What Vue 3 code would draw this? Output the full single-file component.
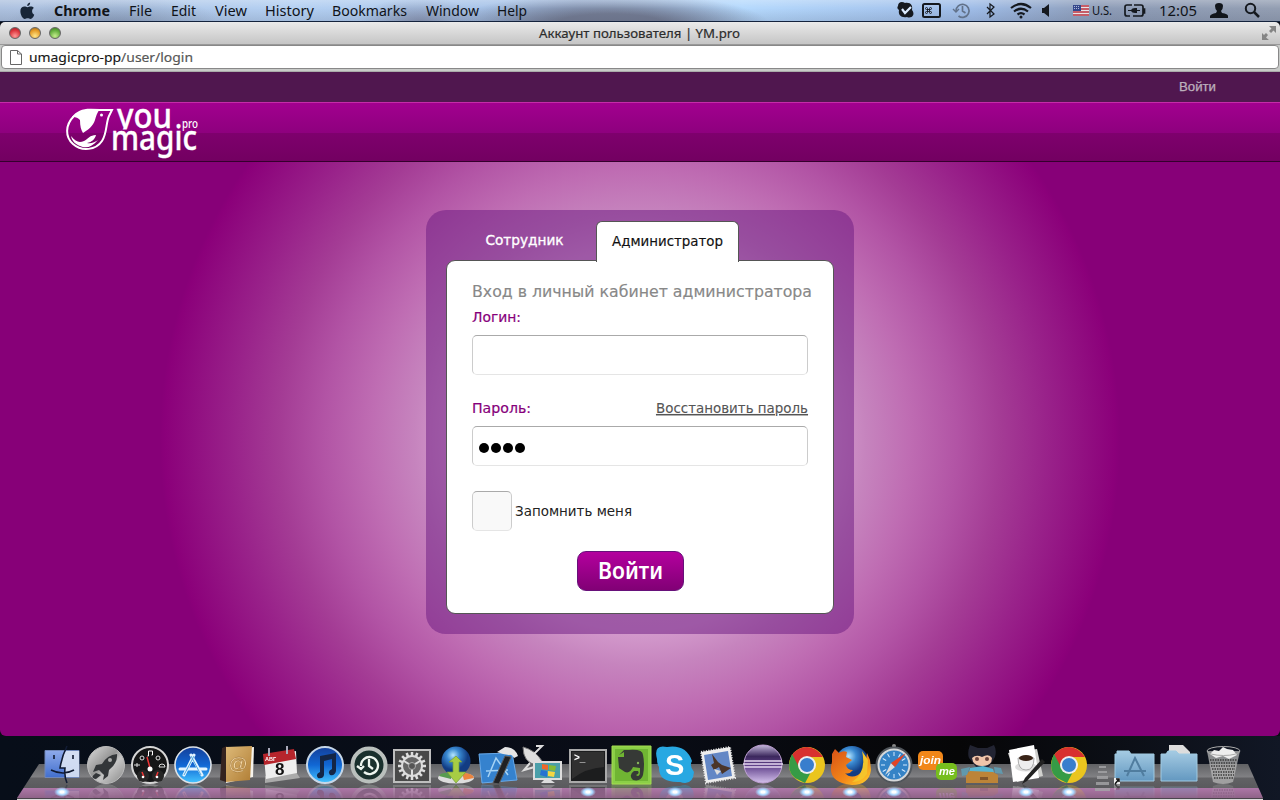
<script setup>
const menus = [
  { t: 'Chrome', w: 75, l: 56 }, { t: 'File', w: 42, l: 23 }, { t: 'Edit', w: 44, l: 25 },
  { t: 'View', w: 50, l: 32 }, { t: 'History', w: 67, l: 49 }, { t: 'Bookmarks', w: 94, l: 75 },
  { t: 'Window', w: 71, l: 53 }, { t: 'Help', w: 50, l: 30 }
]
const gearTeeth = Array.from({ length: 16 }, (_, i) => i * 22.5)
const compassTicks = Array.from({ length: 12 }, (_, i) => i * 30)
</script>

<template>
  <div class="screen">
    <header class="menubar">
      <svg class="apple" viewBox="0 0 16 18"><path fill="#182638" d="M10.8 0C8.8.3 7.6 1.9 7.7 3.7 9.6 3.6 11 2 10.8 0ZM8 5C6.800 5 6 4 4.300 4.300 1.700 4.500.3 6.700.4 9.500.6 13.500 3 17.500 5.100 17.500 6.200 17.500 6.900 16.800 8.200 16.800 9.500 16.800 10.100 17.500 11.200 17.500 13 17.400 14.600 14.900 15.200 12.900 13.600 12.100 12.900 10.900 12.900 9.300 12.900 7.800 13.600 6.700 14.800 5.900 13.900 4.700 12.700 4.300 11.600 4.300 10.100 4.200 9 5 8 5Z"/></svg>
      <nav>
        <svg v-for="(m, i) in menus" :key="m.t" :width="m.w" height="22"><text x="0" y="16" :textLength="m.l" lengthAdjust="spacingAndGlyphs" :class="{ strong: i === 0 }">{{ m.t }}</text></svg>
      </nav>
      <svg class="status" viewBox="0 0 380 22" fill="none" stroke="#15191f">
        <g transform="translate(-2 0)"><path stroke="none" fill="#15191f" d="M0 6C0 2 4 1 7 3 13 2 15 6 14 10 18 15 13 19 9 17 3 18 0 15 1 10-1 9-1 7 0 6Z"/><path d="m4 9 3 4 6-6" stroke="#dcecff" stroke-width="2.200"/></g>
        <g transform="translate(-1 0)"><rect x="24" y="4" width="17" height="13" rx="1.500" stroke-width="2"/>
        <g stroke-width=".9"><rect x="28.500" y="9.500" width="2" height="2"/><circle cx="27.500" cy="8.500" r="1"/><circle cx="31.500" cy="8.500" r="1"/><circle cx="27.500" cy="12.500" r="1"/><circle cx="31.500" cy="12.500" r="1"/></g></g>
        <g stroke="#62728a" stroke-width="1.700"><path d="M56 11a6.500 6.500 0 1 1 2.500 5M62.500 6v5l3 2"/><path d="m53 9 3 3 3-3" stroke-width="1.400"/></g>
        <path d="m87 7 7 7-4 3V4l4 3-7 7" stroke-width="1.200"/>
        <g stroke-width="2.200"><path d="M111 8q10-8 20 0M114 11.500q7-5.500 14 0M117.500 14.500q3.500-2.600 7 0"/></g><circle cx="121" cy="17" r="1.500" fill="#15191f" stroke="none"/>
        <path stroke="none" fill="#15191f" d="M142 8h2l5-4v13l-5-4h-2z"/>
        <g stroke="none"><rect x="173" y="5" width="16" height="11" fill="#e8e4e8"/><path d="M181 6h8M173 9h16M173 12h16M173 15h16" stroke="#ba303c" stroke-width="1.500"/><path fill="#34478b" d="M173 5h8v6h-8z"/><path d="M174 6.500h6m-6 2h6" stroke="#e4e8f5" stroke-width=".7" stroke-dasharray="1 1"/></g>
        <text class="us" x="192" y="15" textLength="20" lengthAdjust="spacingAndGlyphs">U.S.</text>
        <path d="M232 5h-5q-2 0-2 2v7q0 2 2 2h3m4-11h7q2 0 2 2v7q0 2-2 2h-8M243 9h1.500v4H243" stroke-width="1.700"/><path stroke="none" fill="#15191f" d="M228 10h3q1-2 4-2h2v2h3v1h-3v2h-2q-3 0-4-2h-3z"/>
        <text x="259" y="16" textLength="38" lengthAdjust="spacingAndGlyphs">12:05</text>
        <path stroke="none" fill="#11151b" d="M310 18v-2q1-2 6-3l1-2q-2-2-2-5 0-3 4-3t4 3q0 3-2 5l1 2q6 1 6 3v2z"/>
        <circle cx="350.500" cy="8.500" r="4.700" stroke-width="2"/><path d="m354 12 5 5" stroke-width="2.500"/>
      </svg>
    </header>

    <section class="window">
      <div class="titlebar">
        <i class="light red"></i><i class="light amber"></i><i class="light green"></i>
        <svg class="title" width="202" height="24"><text x="0" y="17" textLength="201" lengthAdjust="spacingAndGlyphs">Аккаунт пользователя | YM.pro</text></svg>
        <svg class="expand" width="16" height="16" viewBox="0 0 16 16" fill="#858585"><path d="M8 1h7v7l-2.500-2.500L10 8 8 6l2.500-2.500zM1 8l2 2 2-2 2 2-2 2.500 3 2.500H1z"/></svg>
      </div>
      <div class="addressbar">
        <div class="address">
          <svg width="12" height="15" viewBox="0 0 12 15" fill="#fff" stroke="#666"><path d="M.5.5h7L11.500 4v10.500H.5zM7.500.5V4h4"/></svg>
          <svg class="url" width="166" height="22"><text x="0" y="16" textLength="164" lengthAdjust="spacingAndGlyphs">umagicpro-pp<tspan fill="#5c5c5c">/user/login</tspan></text></svg>
        </div>
      </div>
      <div class="userbar"><svg width="38" height="20"><text x="0" y="14" textLength="37" lengthAdjust="spacingAndGlyphs">Войти</text></svg></div>
      <div class="brandbar">
        <svg class="logo" viewBox="0 0 134 52" fill="#fff">
          <clipPath id="upper"><path d="M48 0h60v21.500H48z"/></clipPath>
          <path fill="none" stroke="#fff" stroke-width="2" d="M8 8C-1 17-1 29 7 36c9 8 23 6 29-3 5-7 4-19 7-25l3-6H31"/>
          <path d="M6 9C10 3 17 .5 25 .7L34 1c-3 4-4 7-5 11-2 6-7 10-12 13-2-3-3-7-3-13-3-3-5-3-8-3Z"/><circle cx="35.500" cy="7" r="1.500"/>
          <path d="M5 28c5 6 8 7 13 5 4-2 6-6 12-6-1 4-4 7-9 8 4 1 8-1 11-3-6 7-12 9-18 6-5-2-8-5-9-10Z"/>
          <g clip-path="url(#upper)"><text class="word" x="51" y="20" font-size="35" textLength="55" lengthAdjust="spacingAndGlyphs">you</text></g>
          <text class="word" x="45" y="42" font-size="34" textLength="86" lengthAdjust="spacingAndGlyphs">magic</text>
          <text class="word small" x="116" y="20" font-size="12" textLength="16" lengthAdjust="spacingAndGlyphs">pro</text>
        </svg>
      </div>
      <main class="page">
        <div class="panel">
          <div class="tabs">
            <svg class="tab" width="150" height="40"><text x="39.500" y="24" textLength="78" lengthAdjust="spacingAndGlyphs">Сотрудник</text></svg>
            <div class="tab active"><svg width="141" height="40"><text x="15" y="24" textLength="111" lengthAdjust="spacingAndGlyphs">Администратор</text></svg></div>
          </div>
          <form class="card" @submit.prevent>
            <svg class="heading" width="342" height="24"><text x="0" y="16" textLength="340" lengthAdjust="spacingAndGlyphs">Вход в личный кабинет администратора</text></svg>
            <div class="row first"><svg width="60" height="20"><text x="0" y="15" textLength="49" lengthAdjust="spacingAndGlyphs">Логин:</text></svg></div>
            <div class="field"></div>
            <div class="row"><svg width="60" height="20"><text x="0" y="15" textLength="59" lengthAdjust="spacingAndGlyphs">Пароль:</text></svg>
              <svg class="restore" width="152" height="20"><text x="0" y="15" textLength="152" lengthAdjust="spacingAndGlyphs">Восстановить пароль</text></svg></div>
            <div class="field"><b v-for="n in 4" :key="n"></b></div>
            <div class="remember"><span></span><svg width="120" height="20"><text x="0" y="15" textLength="117" lengthAdjust="spacingAndGlyphs">Запомнить меня</text></svg></div>
            <button type="button"><svg width="66" height="34"><text x="0" y="25" textLength="65" lengthAdjust="spacingAndGlyphs">Войти</text></svg></button>
          </form>
        </div>
      </main>
    </section>

    <footer class="dock">
      <svg class="defs" width="0" height="0"><defs>
        <linearGradient id="blue" x2="0" y2="1"><stop stop-color="#143f99"/><stop offset=".5" stop-color="#1167d4"/><stop offset="1" stop-color="#44c4ff"/></linearGradient>
        <linearGradient id="finder" x2="0" y2="1"><stop stop-color="#8eaaea"/><stop offset="1" stop-color="#426fce"/></linearGradient>
        <linearGradient id="silver" x2="1" y2="1"><stop stop-color="#ddd"/><stop offset=".45" stop-color="#959595"/><stop offset=".6" stop-color="#c5c5c5"/><stop offset="1" stop-color="#888"/></linearGradient>
        <linearGradient id="gold" x2="1" y2="1"><stop stop-color="#ddb978"/><stop offset="1" stop-color="#b07d34"/></linearGradient>
        <linearGradient id="folder" x2="0" y2="1"><stop stop-color="#a5cbe3"/><stop offset="1" stop-color="#6398c0"/></linearGradient>
        <radialGradient id="globe" cx=".4" cy=".3"><stop stop-color="#b6e7ff"/><stop offset=".45" stop-color="#3988d0"/><stop offset="1" stop-color="#123c83"/></radialGradient>
        <linearGradient id="eclipse" x2="0" y2="1"><stop stop-color="#c3b8da"/><stop offset=".3" stop-color="#3c285d"/><stop offset=".55" stop-color="#62438c"/><stop offset="1" stop-color="#d4c1ec"/></linearGradient>
        <linearGradient id="fire" x2="1" y2="1"><stop stop-color="#d75016"/><stop offset=".6" stop-color="#f58a19"/><stop offset="1" stop-color="#ffd82e"/></linearGradient>
      </defs></svg>
      <div class="shelf"></div>
      <div class="icons">
        <div class="slot lit"><svg viewBox="0 0 44 40"><path fill="url(#finder)" stroke="#7087b9" d="M5 6.500h34v27H5z"/><path fill="#dce4f4" opacity=".9" d="M26 7h13v26H25l-1-9h-4c1-7 2-12 6-17z"/><path fill="none" stroke="#111b33" stroke-width="1.600" d="M14 11v4M33 11v4M27 2q-5 10-7 22h5q-1 8 2 15M11 26q12 6 23 0"/></svg></div>
        <div class="slot"><svg viewBox="0 0 44 40"><circle cx="22" cy="21" r="18.500" fill="url(#silver)" stroke="#bbb"/><path fill="#333639" d="M33 10q-10 1-15 10l-6 1-3 7 6-2 5 5-1 5 5-4 1-6q9-7 8-16ZM12 29q-7 5 0 6l5-4z"/><circle cx="26" cy="16" r="2" fill="#aaa"/></svg></div>
        <div class="slot"><svg viewBox="0 0 44 40"><circle cx="22" cy="21" r="18" fill="#151617" stroke="#d6d6d6" stroke-width="2"/><circle cx="15" cy="32" r="6" fill="#262626"/><circle cx="30" cy="32" r="6" fill="#262626"/><path stroke="#e33" stroke-width="1.500" d="M19 13l3 11M14 28l2 5M30 28l-2 5"/><circle cx="22" cy="25" r="2.500" fill="#fff"/><circle cx="15" cy="33" r="1.300" fill="#fff"/><circle cx="29" cy="33" r="1.300" fill="#fff"/><g fill="none" stroke="#ddd"><circle cx="14" cy="14" r="2"/><circle cx="30" cy="14" r="2"/><path d="M6 21h6m-3-2v4M31 23h6q0-3-3-3t-3 3"/></g><path fill="none" stroke="#fff" d="M20.500 12V7h4v4m-5 1h1m3-1h1"/></svg></div>
        <div class="slot"><svg viewBox="0 0 44 40"><circle cx="22" cy="21" r="18" fill="url(#blue)" stroke="#dde3e9" stroke-width="1.600"/><g stroke="#e3f3ff" stroke-width="3" stroke-linecap="round"><path d="M13 31 23 11M20 11l11 20M9 25h26"/></g><path stroke="#4fa6de" d="m13 31 10-19M20 12l10 19"/></svg></div>
        <div class="slot"><svg viewBox="0 0 44 40"><path fill="#f6f3ec" d="m11 5 28-2-1 30-27 6z"/><path fill="#35231f" d="m7 4 5-2-1 36-6-2z"/><path fill="url(#gold)" d="m11 3 26-1-2 34-24 2z"/><text x="13.500" y="26" font-size="19" fill="#f5d9a8" stroke="#8d632b" stroke-width=".3">@</text></svg></div>
        <div class="slot"><svg viewBox="0 0 44 40"><path fill="#aaa" d="m6 32 31-4 4 6-35 5z"/><path fill="#eee" d="m5 13 32-6 1 22-31 6z"/><path fill="#b6252c" d="m4 10 31-5 2 10-32 6z"/><path stroke="#aab" stroke-width="2" d="M10 4v8M28 2v8"/><text x="16" y="31" font-size="17" font-weight="bold" fill="#111">8</text><text x="6" y="17" font-size="5.500" font-weight="bold" fill="#fff">АВГ</text></svg></div>
        <div class="slot"><svg viewBox="0 0 44 40"><circle cx="22" cy="21" r="18" fill="url(#blue)" stroke="#c6d7e8" stroke-width="2"/><path fill="#142646" d="m17 12 16-3v18q-1 5-6 4-3-4 2-6V15l-8 2v14q-1 4-6 3-3-4 2-6z"/></svg></div>
        <div class="slot"><svg viewBox="0 0 44 40"><circle cx="22" cy="21" r="16.500" fill="#19302d" stroke="#bac0bd" stroke-width="4"/><path fill="none" stroke="#edf5ef" stroke-width="2.300" d="M14 22a8.500 8.500 0 1 1 3 6M22 15v7l4 3M10 22l4 3 3-3"/></svg></div>
        <div class="slot"><svg viewBox="0 0 44 40"><path fill="#494949" stroke="#bebebe" stroke-width="2" d="M4 6h36v32H4z"/><g stroke="#dedede" stroke-width="2.500"><path v-for="a in gearTeeth" :key="a" d="M22 8v5" :transform="`rotate(${a} 22 22)`"/></g><circle cx="22" cy="22" r="10" fill="#666" stroke="#ddd" stroke-width="2"/><path stroke="#ddd" stroke-width="2" d="m22 22-8-5m8 5 8-5m-8 5v9"/><circle cx="22" cy="22" r="3.500" fill="#555" stroke="#aaa"/></svg></div>
        <div class="slot"><svg viewBox="0 0 44 40"><ellipse cx="22" cy="34" rx="18" ry="5.500" fill="#ddd"/><path fill="#eb8540" d="M28 29q11 0 12 5l-10 2z"/><path fill="#589c50" d="M5 32q2-4 12-3v6z"/><circle cx="22" cy="17" r="14.500" fill="url(#globe)"/><path fill="#a7cd44" stroke="#739c3a" stroke-width=".7" d="m22 12 6 6h-3v10h7L22 39l-9-11h6V18h-4z"/></svg></div>
        <div class="slot"><svg viewBox="0 0 44 40"><path fill="#3582ce" stroke="#68aaea" d="m1 10 33-1 5 27-35 3z"/><path fill="none" stroke="#a6d3f5" stroke-width="1.500" d="m10 33 8-19 12 17M8 27l22-1"/><path fill="#202124" stroke="#5a5a5a" d="m27 12 6 1-12 27-6-1z"/><path fill="#e5e5e5" d="m19 8 8-5q10 0 13 9l-4 2q-2-4-5-3l-6-1z"/></svg></div>
        <div class="slot"><svg viewBox="0 0 44 40"><path fill="#ddd" stroke="#777" d="M1 3q0 16 14 18l5-4Q13 6 1 3Z"/><path fill="none" stroke="#ddd" stroke-width="2" d="m9 13 11-11-6 0M8 19l-6 7 14-4"/><path fill="#4a9fa9" stroke="#ddd" stroke-width="2" d="M12 18h27v17H12z"/><path fill="#ddd" d="M22 36h7l4 3H19z"/><path fill="#ec682b" d="m20 20 6 1v5l-6-1z"/><path fill="#85bb35" d="m27 21 7 1-1 5-6-1z"/><path fill="#2772d1" d="m19 26 6 1v6l-7-2z"/><path fill="#f5d642" d="m26 27 7 1-1 5-6-1z"/></svg></div>
        <div class="slot lit"><svg viewBox="0 0 44 40"><path fill="#1c1d1e" stroke="#aaa" stroke-width="2" d="M4 6h36v32H4z"/><path fill="#303030" d="M6 8h32v15q-18 1-32 12z"/><text x="8" y="17" font-size="10" font-weight="bold" fill="#fff">&gt;_</text></svg></div>
        <div class="slot"><svg viewBox="0 0 44 40"><path fill="#8bcf47" stroke="#a5dd50" d="M3 2h39v38H3z"/><path fill="#70b533" d="M6 5h33v32H6z"/><path fill="#363936" d="m10 11 5-5h5q14-1 14 5 2 9 0 20-2 7-10 5-5-5 1-9h4q2 3-2 4 4 3 4-4v-3l-7-1q-3 7-8 5l-6-4-1-11h6V8z"/><circle cx="29" cy="19" r="1.200" fill="#88b55d"/></svg></div>
        <div class="slot lit"><svg viewBox="0 0 44 40"><path fill="#28a8e2" d="M4 15q-4-15 10-12 19-3 25 14-3 5 2 11-1 14-14 10Q5 39 6 23q-2-3-2-8Z"/><text x="12" y="31" font-size="29" font-weight="bold" fill="#fff">S</text></svg></div>
        <div class="slot"><svg viewBox="0 0 44 40"><path fill="#eee" stroke="#eee" stroke-width="2" stroke-dasharray="1 1.500" d="m4 8 29-5 5 31-29 5z"/><path fill="#6387c5" d="m7 11 24-4 4 25-24 4z"/><path fill="#4b3529" d="m15 10 6 8 4 3 9 3-9 6-3-7-5 3-3-5 3-2z"/><path fill="#ddd" d="m17 25 7 2-4 4z"/></svg></div>
        <div class="slot lit"><svg viewBox="0 0 44 40"><circle cx="22" cy="20" r="19" fill="url(#eclipse)" stroke="#c2a2d7"/><path stroke="#e5d8ef" stroke-width="1.300" d="M3 17h38M2 20h40M3 23h38"/></svg></div>
        <div class="slot lit"><svg viewBox="0 0 44 40"><circle cx="22" cy="21" r="18" fill="#eac51e"/><path fill="#d8312f" d="M22 21H11L7 11Q13 3 22 3t16 10H22z"/><path fill="#369b46" d="M7 10Q0 26 10 34l10 5 7-13-12-1z"/><circle cx="22" cy="21" r="9" fill="#eee"/><circle cx="22" cy="21" r="7" fill="#397ecd"/></svg></div>
        <div class="slot lit"><svg viewBox="0 0 44 40"><circle cx="24" cy="19" r="17" fill="url(#globe)"/><path fill="url(#fire)" d="M4 10 7 5l4 4q4-3 8-1l-1 5 6 3-6 5q1 5 7 5-4 5-8 3 5 6 13 2 8-6 9-22l3 7 1 10q-2 15-19 15Q-2 38 4 18z"/><path fill="#f4c42b" d="m34 7 6 9-1 14q-5 8-15 8 15-9 10-31z"/></svg></div>
        <div class="slot lit"><svg viewBox="0 0 44 40"><circle cx="22" cy="2" r="2" fill="#888"/><circle cx="22" cy="21" r="17" fill="#3583c6" stroke="#50555b" stroke-width="3"/><circle cx="22" cy="21" r="15.500" fill="none" stroke="#d5d8da" stroke-width="2"/><g stroke="#d4eaff"><path v-for="a in compassTicks" :key="a" d="M22 8v4" :transform="`rotate(${a} 22 21)`"/></g><path fill="#ddd" d="m13 31 6-12 4 4z"/><path fill="#e34525" d="m34 9-11 14-4-4z"/></svg></div>
        <div class="slot"><svg viewBox="0 0 44 40"><rect x="2" y="7" width="25" height="19" rx="5" fill="#f18719"/><rect x="20" y="19" width="21" height="17" rx="5" fill="#76be1d"/><text x="4" y="20" font-size="11" font-style="italic" font-weight="bold" fill="#fff" textLength="21" lengthAdjust="spacingAndGlyphs">join</text><text x="23" y="31" font-size="11" font-style="italic" font-weight="bold" fill="#fff" textLength="16" lengthAdjust="spacingAndGlyphs">me</text></svg></div>
        <div class="slot"><svg viewBox="0 0 44 40"><path fill="#222432" d="m10 1 8 3h9l7-3q3 5 1 12l-6 10H16l-7-9Q7 9 10 1Z"/><path fill="#efc5aa" d="M12 14q4-4 10-1 7-4 10 1 0 8-10 8-9 0-10-8Z"/><circle cx="17" cy="15" r="2" fill="#6b443c"/><circle cx="27" cy="15" r="2" fill="#6b443c"/><path fill="#58b5d1" d="m10 24 13-2 10 3 2 7H8z"/><path fill="#bc8438" d="m6 30 4-3 23 1 5 3v8H6z"/><path fill="#6199ad" d="m1 25 9-2-3 8-5 1zM34 23l7 1 2 6-8-1z"/><path fill="#80552a" d="M20 33h8v3h-8z"/></svg></div>
        <div class="slot lit"><svg viewBox="0 0 44 40"><path fill="#d1d1ce" d="m4 9 29-4 6 27-26 6z"/><path fill="#fff" d="m5 6 25-5 5 33-26 4z"/><ellipse cx="22" cy="23" rx="11" ry="4.500" fill="#ddd"/><path fill="#eee" stroke="#aaa" d="M14 14h16q0 12-8 12t-8-12Z"/><ellipse cx="22" cy="14" rx="7" ry="3" fill="#392317"/><path fill="#222" d="m38 15 3 3-18 19-5 3 3-6z"/></svg></div>
        <div class="slot lit"><svg viewBox="0 0 44 40"><circle cx="22" cy="21" r="18" fill="#eac51e"/><path fill="#d8312f" d="M22 21H11L7 11Q13 3 22 3t16 10H22z"/><path fill="#369b46" d="M7 10Q0 26 10 34l10 5 7-13-12-1z"/><circle cx="22" cy="21" r="9" fill="#eee"/><circle cx="22" cy="21" r="7" fill="#397ecd"/></svg></div>
        <svg class="separator" width="22" height="56"><path fill="#a5a5a8" opacity=".8" d="M8 22h7v2H8zm-1 5h9v2H7zm-1 5h11v3H6zm-1 6h13v3H5zm-1 6h15v3H4z"/></svg>
        <div class="slot"><svg viewBox="0 0 44 40"><path fill="url(#folder)" stroke="#a0cae1" d="M2 10h2V7h12l2 3h23v27H2z"/><path fill="none" stroke="#507d9f" stroke-width="2" d="m14 32 8-18 9 18M11 27h22"/><path fill="#eee" d="M1 34h6v6H1z"/><path fill="none" stroke="#111" stroke-width="1.500" d="m2 40 4-5m-3 0h3v3"/></svg></div>
        <div class="slot"><svg viewBox="0 0 44 40"><path fill="#ddd" d="M12 1h14l7 7v8H12z"/><path fill="url(#folder)" stroke="#a0cae1" d="M4 10h5l2-3h8l3 3h18v27H4z"/></svg></div>
        <div class="slot"><svg viewBox="0 0 44 40"><path fill="#b5b5b5" opacity=".75" d="m6 7 6 31q10 4 20 0l7-31z"/><path stroke="#3c3c3c" stroke-width="1.500" stroke-dasharray="1.500 1" d="M9 16h27M10 19h25M10 22h25M11 25h23M12 28h21M12 31h21M13 34h19"/><path fill="#eee" d="m9 10 4-4 5 1 4-4 4 2 6 1 4 5-8 4-6-3-7 2z"/><ellipse cx="22.500" cy="7" rx="16.500" ry="4.500" fill="none" stroke="#aaa"/></svg></div>
      </div>
    </footer>
  </div>
</template>

<style>
html, body { margin: 0; overflow: hidden; }
</style>
<style scoped>
.screen { width: 1280px; height: 800px; overflow: hidden; position: relative; background: #090c14; font-family: "DejaVu Sans", sans-serif; }
svg { display: block; flex: none; overflow: visible; }
.menubar { height: 22px; box-sizing: border-box; border-bottom: 1px solid #14233d; display: flex; background: linear-gradient(rgba(255,255,255,.25), transparent 40%, rgba(60,70,95,.15)), radial-gradient(ellipse 110px 30px at 115px 25px, #8c9fbc 0%, transparent 100%), radial-gradient(ellipse 60px 25px at 420px 22px, #8995b2 0%, transparent 100%), radial-gradient(ellipse 160px 32px at 610px 25px, #737b92 35%, transparent 100%), linear-gradient(90deg, #adc1df, #b4d0f2 23%, #a2bee5 45%, #b5d9fd 58%, #9fbce7 76%, #8d9cb7 86%, #939eb2); font-family: "Noto Sans", sans-serif; }
.menubar text { font-size: 14px; fill: #101318; stroke: none; }
.menubar text.strong { font-weight: 700; }
.menubar text.us { font-size: 12px; }
.apple { width: 15px; height: 18px; margin: 2px 19px 0 20px; }
.menubar nav { display: flex; width: 846px; }
.status { width: 380px; height: 22px; }
.window { height: 714px; overflow: hidden; border-radius: 5px 5px 6px 6px; }
.titlebar { height: 23px; box-sizing: border-box; background: linear-gradient(#eaeaea, #c5c5c5); border-bottom: 1px solid #999; display: flex; align-items: center; padding-left: 9px; gap: 8px; }
.light { width: 12px; height: 12px; border-radius: 50%; box-sizing: border-box; border: 1px solid #666; }
.red { background: radial-gradient(circle at 50% 80%, #ff9a98, #dc353d 60%, #982027); }
.amber { background: radial-gradient(circle at 50% 80%, #ffe68a, #e59c29 60%, #956319); }
.green { background: radial-gradient(circle at 50% 80%, #c5ed8d, #63ad3e 60%, #3b7625); }
.title { margin-left: 470px; font: 13px "Noto Sans", sans-serif; fill: #2c2c2c; stroke: #2c2c2c; stroke-width: .2px; }
.expand { margin-left: auto; margin-right: 3px; }
.addressbar { height: 27px; box-sizing: border-box; background: #c8cac8; padding: 0 1px 2px 1px; border-bottom: 1px solid #aaa; }
.address { height: 24px; box-sizing: border-box; border: 1px solid #888; border-radius: 4px; background: #fff; display: flex; align-items: center; padding-left: 8px; gap: 7px; }
.url { font: 13px "Noto Sans", sans-serif; fill: #111; stroke: #333; stroke-width: .15px; }
.userbar { height: 30px; background: #50174f; display: flex; justify-content: flex-end; align-items: center; padding-right: 63px; font: 12px "Liberation Sans", sans-serif; }
.userbar text { fill: #bcb0bc; stroke: #bcb0bc; stroke-width: .25px; }
.brandbar { height: 60px; box-sizing: border-box; border-top: 1px solid #c42ca8; border-bottom: 1px solid #35002d; background: linear-gradient(#a2008f 0, #8e007e 51%, #7e006d 52%, #730061); padding: 5px 0 0 66px; }
.logo { width: 134px; height: 52px; overflow: visible; }
.word { font-family: "Noto Sans", sans-serif; font-weight: 500; stroke: #fff; stroke-width: .35px; }
.small { stroke-width: 0; }
.page { height: 574px; display: flex; justify-content: center; align-items: flex-start; padding-top: 48px; box-sizing: border-box; background: radial-gradient(circle 480px at 640px 278px, #e0bcdf 0, #d39acc 40%, #c684be 47%, #bf6db3 56%, #b254a5 66%, #a43c95 75%, #99228a 85%, #8b007a 99%, #870078 100%); }
.panel { width: 428px; height: 424px; box-sizing: border-box; border-radius: 20px; background: rgba(106, 24, 127, .5); padding: 11px 21px 0 20px; }
.tabs { display: flex; height: 40px; position: relative; margin-bottom: -1px; z-index: 1; }
.tab text { font-size: 14px; fill: #fff; stroke: #fff; stroke-width: .35px; }
.active { width: 143px; height: 41px; box-sizing: border-box; border: 1px solid #555; border-bottom: 0; background: #fff; border-radius: 6px 6px 0 0; }
.active text { fill: #111; stroke: #111; stroke-width: .15px; }
.card { width: 388px; height: 354px; box-sizing: border-box; border: 1px solid #555; border-radius: 9px; background: #fff; padding: 20px 25px 0; }
.heading { font-size: 16px; fill: #888; stroke: #888; stroke-width: .15px; }
.row { display: flex; justify-content: space-between; height: 28px; font-size: 14px; fill: #87007b; padding-top: 23px; }
.row text { stroke: #87007b; stroke-width: .2px; }
.row.first { padding-top: 2px; }
.row .restore text { fill: #555; stroke: #555; stroke-width: .1px; text-decoration: underline; }
.field { width: 336px; height: 40px; box-sizing: border-box; border: 1px solid; border-color: #aaa #ccc #e5e5e5; border-radius: 5px; display: flex; align-items: center; gap: 2px; padding: 4px 0 0 6px; }
.field b { width: 10px; height: 10px; border-radius: 50%; background: #000; }
.remember { display: flex; align-items: center; gap: 3px; margin-top: 25px; font-size: 14px; fill: #222; }
.remember span { width: 40px; height: 40px; box-sizing: border-box; border: 1px solid; border-color: #aaa #ccc #e5e5e5; background: #f9f9f9; border-radius: 5px; }
button { width: 107px; height: 40px; display: flex; justify-content: center; align-items: center; padding: 0; margin: 20px 0 0 105px; border: 1px solid #67117a; border-radius: 9px; background: linear-gradient(#b4009e, #810075); font: 600 23px "Noto Sans", sans-serif; }
button text { fill: #fff; }
.dock { position: relative; height: 64px; overflow: hidden; background: linear-gradient(90deg, #070e19, #090c16 50%, #060607 75%, #111725); }
.defs { position: absolute; }
.shelf { position: absolute; left: 17px; top: 28px; width: 1246px; height: 36px; clip-path: polygon(22px 0, 1231px 0, 100% 34px, 100% 100%, 0 100%, 0 34px); background: linear-gradient(#606164 0, #818184 13px, #626265 14px, #5a5a5d 24px, #ad77a7 24px, #8f6388 34px, #4b444b 34px, #4b444b 35px, #ddd 35px); }
.icons { position: relative; display: flex; padding: 8px 0 0 40px; }
.slot { width: 43.8px; height: 56px; position: relative; flex: none; }
.slot > svg { width: 44px; height: 40px; font-family: "Liberation Sans", sans-serif; -webkit-box-reflect: below 0 linear-gradient(transparent 60%, rgba(0, 0, 0, .35)); }
.lit::after { content: ""; position: absolute; left: 14px; bottom: 3px; width: 16px; height: 10px; background: radial-gradient(ellipse, #fff 15%, #a9d7ff 40%, transparent 70%); }
</style>
